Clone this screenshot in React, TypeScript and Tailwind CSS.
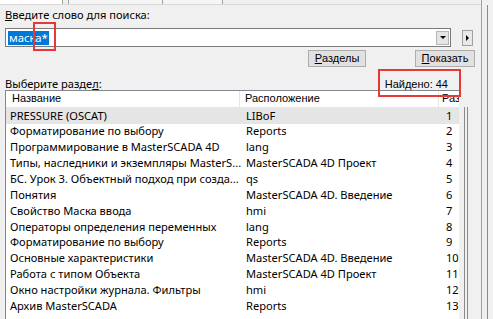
import React from 'react';

type Row = { name: string; place: string; n: number };

const rows: Row[] = [
  { name: 'PRESSURE (OSCAT)', place: 'LIBoF', n: 1 },
  { name: 'Форматирование по выбору', place: 'Reports', n: 2 },
  { name: 'Программирование в MasterSCADA 4D', place: 'lang', n: 3 },
  { name: 'Типы, наследники и экземпляры MasterS...', place: 'MasterSCADA 4D Проект', n: 4 },
  { name: 'БС. Урок 3. Объектный подход при созда...', place: 'qs', n: 5 },
  { name: 'Понятия', place: 'MasterSCADA 4D. Введение', n: 6 },
  { name: 'Свойство Маска ввода', place: 'hmi', n: 7 },
  { name: 'Операторы определения переменных', place: 'lang', n: 8 },
  { name: 'Форматирование по выбору', place: 'Reports', n: 9 },
  { name: 'Основные характеристики', place: 'MasterSCADA 4D. Введение', n: 10 },
  { name: 'Работа с типом Объекта', place: 'MasterSCADA 4D Проект', n: 11 },
  { name: 'Окно настройки журнала. Фильтры', place: 'hmi', n: 12 },
  { name: 'Архив MasterSCADA', place: 'Reports', n: 13 },
];

const classic = { fontFamily: '"Liberation Sans", Arial, sans-serif' };

function Btn ({ accel, rest, w }: { accel: string; rest: string; w: string }) {
  return (
    <div className={`${w} h-[17px] border border-[#adadad] bg-[#e1e1e1] flex items-center justify-center text-[11px] leading-none text-black`} style={classic}>
      <span className="underline underline-offset-1">{accel}</span>
      {rest}
    </div>
  );
}

export default function App () {
  return (
    <div className="w-[493px] h-[319px] overflow-hidden bg-[#f0f0f0] flex text-black" style={{ fontFamily: '"Segoe UI", "Noto Sans", sans-serif' }}>
      <div className="w-[482px] shrink-0 flex flex-col border-r border-[#a0a0a0]">
        {/* tab strip remnants */}
        <div className="h-[5px] flex border-b border-[#d9d9d9]">
          <div className="w-[63px] bg-white border-r border-[#a0a0a0]" />
          <div className="w-[5px]" />
          <div className="w-[95px] bg-[#f5f5f5] border-l border-r border-[#a0a0a0]" />
          <div className="w-[60px] bg-[#f5f5f5] border-r border-[#a0a0a0]" />
          <div className="flex-1" />
        </div>

        <div className="pl-[5px] pt-[3px] text-[11.1px] leading-[14px]">
          <span className="underline">В</span>ведите слово для поиска:
        </div>

        <div className="mt-[6px] flex items-center">
          <div className="ml-[5px] w-[446px] h-[19px] bg-white border border-[#7a7a7a] flex items-center relative">
            <span className="ml-[2px] h-[14px] px-[1px] bg-[#0078d7] text-white text-[11.3px] leading-[14px]">маска*</span>
            <div className="flex-1" />
            <div className="w-[13px] h-[14px] mr-[1px] bg-[#e5e5e5] border border-[#b5b5b5] flex items-center justify-center">
              <div className="w-0 h-0 border-l-[3px] border-r-[3px] border-t-[3px] border-l-transparent border-r-transparent border-t-black" />
            </div>
            <div className="absolute left-[27px] top-[-7px] w-[23px] h-[29px] border-2 border-[#e53935]" />
          </div>
          <div className="ml-[11px] w-[11px] h-[16px] bg-[#e8e8e8] border border-[#a0a0a0] flex items-center justify-center">
            <div className="w-0 h-0 border-t-[3px] border-b-[3px] border-l-[3px] border-t-transparent border-b-transparent border-l-black" />
          </div>
        </div>

        <div className="mt-[3px] flex">
          <div className="ml-[308px]">
            <Btn accel="Р" rest="азделы" w="w-[58px]" />
          </div>
          <div className="ml-[49px]">
            <Btn accel="П" rest="оказать" w="w-[60px]" />
          </div>
        </div>

        <div className="mt-[10px] flex items-center h-[14px]">
          <div className="pl-[5px] text-[11.1px] leading-[14px]">
            Выберите разде<span className="underline">л</span>:
          </div>
          <div className="ml-auto mr-[33px] relative text-[11px] leading-[14px]" style={classic}>
            Найдено: 44
            <div className="absolute left-[-7px] top-[-8px] w-[83px] h-[28px] border-2 border-[#e53935]" />
          </div>
        </div>

        <div className="flex flex-1 mt-[-1px]">
          <div className="ml-[5px] w-[454px] bg-white border-l border-t border-[#828790] flex flex-col">
            <div className="h-[17px] flex border-b border-[#e5e5e5] text-[11px] leading-[15px]" style={classic}>
              <div className="w-[234px] pl-[6px] border-r border-[#e5e5e5]">Название</div>
              <div className="w-[199px] pl-[5px] border-r border-[#e5e5e5]">Расположение</div>
              <div className="flex-1 pl-[3px] overflow-hidden whitespace-nowrap">Раз</div>
            </div>
            {rows.map((r, i) => (
              <div key={i} className={`h-[15.85px] flex items-center text-[11.1px] whitespace-nowrap ${i === 0 ? 'bg-[#e5e5e5]' : ''}`}>
                <div className="w-[235px] pl-[4px] overflow-hidden">{r.name}</div>
                <div className="w-[199px] pl-[5px]">{r.place}</div>
                <div className="flex-1 pl-[6px]">{r.n}</div>
              </div>
            ))}
          </div>
          <div className="ml-[5px] w-[4px] border-l border-r border-[#8a8a8a] mt-[17px]" />
          <div className="flex-1" />
        </div>
      </div>
      <div className="ml-[5px] w-[1px] bg-[#8a8a8a] mt-[5px]" />
    </div>
  );
}
